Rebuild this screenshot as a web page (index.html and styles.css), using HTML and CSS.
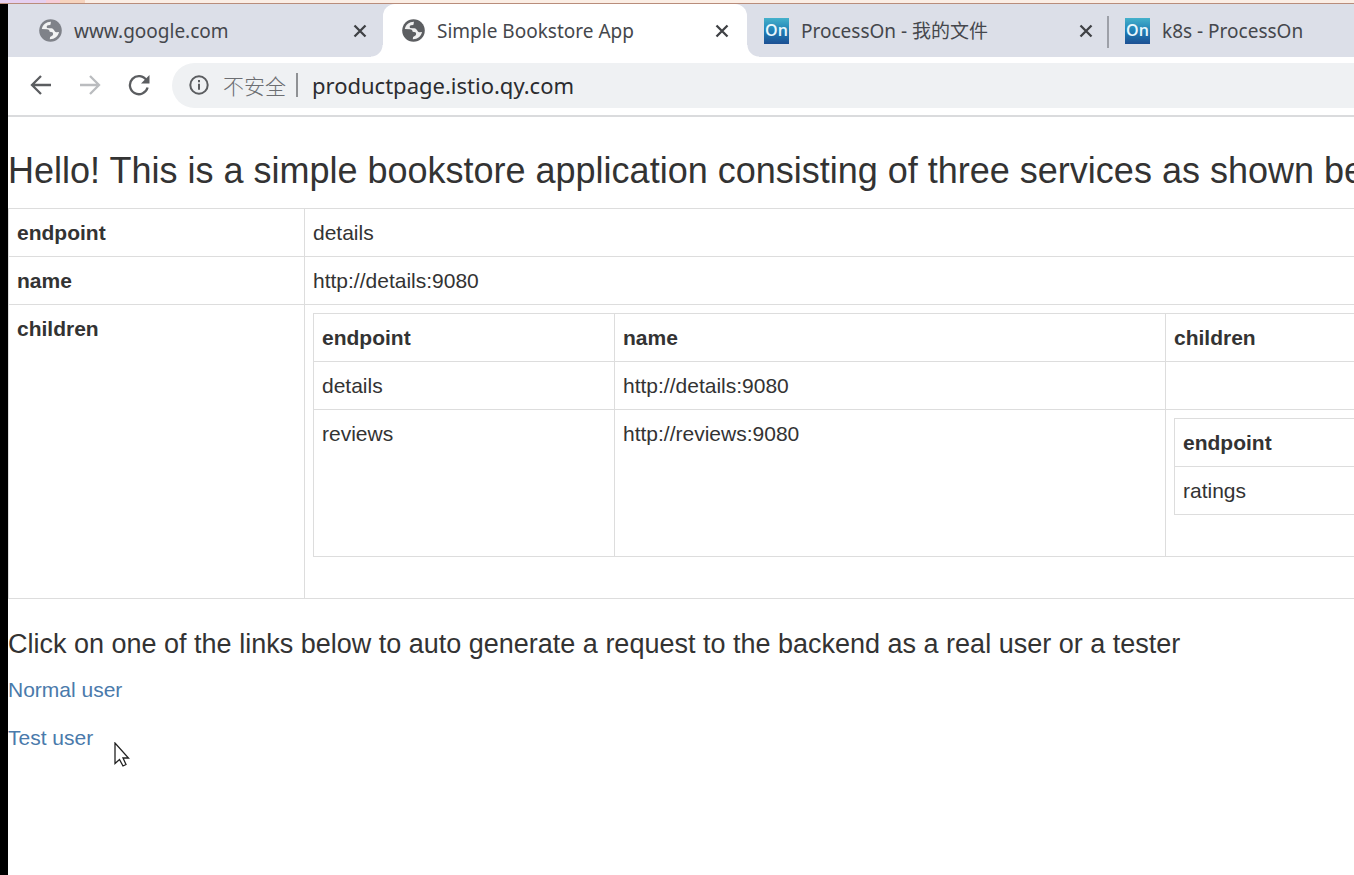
FILE: index.html
```html
<!DOCTYPE html>
<html lang="en">
<head>
<meta charset="utf-8">
<title>Simple Bookstore App</title>
<link rel="stylesheet" href="styles.css">
</head>
<body>
<svg class="defs" aria-hidden="true">
  <defs>
    <symbol id="globe" viewBox="0 0 22 22">
      <circle cx="11" cy="11" r="10.800" fill="currentColor"/>
      <path fill="#fff" fill-opacity=".9" d="M11.500 2.600C7 2.500 3.500 5.300 2.700 9.600l4.800.2c2 .1 2.500 1 2.700 2.400l2.600.4c1 .8.900 2.300.1 3.200l-2.300 1.400-.3 2.200c4.600.1 7.900-2.700 8.900-6.900l-2.600.1c-1.200-.1-1.700-.9-2.300-2.100-.8-1.400-2.300-1.700-4.200-1.600l-2.400-.4c-.8-1-.2-2.300 1-2.500l1.900-.2c.9-.5.300-1.700.9-3.200z"/>
    </symbol>
    <symbol id="cross" viewBox="0 0 14 14">
      <path d="M1.500 1.500l11 11M12.500 1.500l-11 11" fill="none" stroke="currentColor" stroke-width="2.300"/>
    </symbol>
  </defs>
</svg>
<div class="strip"></div>
<div class="window">
  <header>
    <nav class="tabs" aria-label="Tabs">
      <div class="tab">
        <svg class="favicon dim"><use href="#globe"/></svg>
        <span class="title">www.google.com</span>
        <button class="close" aria-label="Close tab"><svg><use href="#cross"/></svg></button>
      </div>
      <div class="tab active">
        <svg class="favicon"><use href="#globe"/></svg>
        <span class="title">Simple Bookstore App</span>
        <button class="close" aria-label="Close tab"><svg><use href="#cross"/></svg></button>
      </div>
      <div class="tab divided">
        <span class="on">On</span>
        <span class="title">ProcessOn - 我的文件</span>
        <button class="close" aria-label="Close tab"><svg><use href="#cross"/></svg></button>
      </div>
      <div class="tab">
        <span class="on">On</span>
        <span class="title">k8s - ProcessOn</span>
      </div>
    </nav>
    <div class="toolbar">
      <div class="buttons">
        <button class="nav" aria-label="Back"><svg viewBox="0 0 22 22"><path d="M21 11H2.500M11 2L2 11l9 9"/></svg></button>
        <button class="nav off" aria-label="Forward"><svg viewBox="0 0 22 22"><path d="M1 11h18.500M11 2l9 9-9 9"/></svg></button>
        <button class="nav" aria-label="Reload"><svg viewBox="0 0 22 22"><path d="M18.600 6.500A9 9 0 1 0 19.600 13.500"/><path class="solid" d="M21.500 1v8.500H13z"/></svg></button>
      </div>
      <div class="omnibox">
        <svg class="info" viewBox="0 0 20 20"><circle cx="10" cy="10" r="8.700"/><path d="M10 8.800v6M10 5v2.200"/></svg>
        <label class="insecure" for="url">不安全</label>
        <span class="bar"></span>
        <input id="url" type="text" value="productpage.istio.qy.com" spellcheck="false">
      </div>
    </div>
  </header>
  <main>
    <h1>Hello! This is a simple bookstore application consisting of three services as shown below</h1>
    <table class="outer">
      <colgroup><col class="c-key"><col></colgroup>
      <tr><th>endpoint</th><td>details</td></tr>
      <tr><th>name</th><td>http://details:9080</td></tr>
      <tr>
        <th>children</th>
        <td>
          <table>
            <colgroup><col class="c-endpoint"><col class="c-name"><col></colgroup>
            <tr><th>endpoint</th><th>name</th><th>children</th></tr>
            <tr><td>details</td><td>http://details:9080</td><td></td></tr>
            <tr>
              <td>reviews</td>
              <td>http://reviews:9080</td>
              <td>
                <table>
                  <tr><th>endpoint</th></tr>
                  <tr><td>ratings</td></tr>
                </table>
              </td>
            </tr>
          </table>
        </td>
      </tr>
    </table>
    <h2>Click on one of the links below to auto generate a request to the backend as a real user or a tester</h2>
    <p><a href="#normal">Normal user</a></p>
    <p><a href="#test">Test user</a></p>
  </main>
</div>
<svg class="pointer" viewBox="0 0 16 25" aria-hidden="true"><path d="M1 1v20.500l4.500-4 3.500 6.500 3-1.500-3-6.500h5.500z"/></svg>
</body>
</html>
```
FILE: styles.css
```css
* { box-sizing: border-box; }
html { height: 100%; }
body {
  margin: 0;
  min-height: 100%;
  display: flex;
  flex-direction: column;
  overflow: hidden;
  background: #000;
  color: #333;
  font: 21px/31px "Liberation Sans", Arial, sans-serif;
}
button { border: 0; padding: 0; background: none; color: inherit; }
svg { display: block; }
.defs { position: absolute; width: 0; height: 0; }

.strip {
  height: 4px;
  border-bottom: 1px solid #b98d7b;
  background: linear-gradient(90deg, #e6d0f0 46px, #f7cdd8 46px 60px, #f6d3bd 60px 85px, #fbeee5 85px);
}
.window { flex: 1; margin-left: 8px; background: #fff; }

/* Tab strip */
.tabs {
  display: flex;
  height: 53px;
  overflow: hidden;
  background: #dcdfe8;
  color: #45474c;
  font: 19px/26px "Noto Sans", "Noto Sans CJK SC", sans-serif;
}
.tab {
  position: relative;
  flex: 0 0 362px;
  display: flex;
  align-items: center;
  gap: 12px;
  padding: 0 3px 0 19px;
}
.tab:first-child { flex-basis: 375px; padding: 0 16px 0 31px; }
.tab.active { flex-basis: 364px; padding-right: 18px; background: #fff; border-radius: 12px 12px 0 0; }
.tab.divided { padding: 0 16px 0 17px; }
.tab.divided::after {
  content: "";
  position: absolute;
  right: 0;
  top: 12px;
  width: 2px;
  height: 32px;
  background: #9da0a8;
}
.tab.divided + .tab { padding-left: 16px; }
.tab.active::before, .tab.active::after {
  content: "";
  position: absolute;
  bottom: 0;
  width: 12px;
  height: 12px;
}
.tab.active::before { right: 100%; background: radial-gradient(circle at 0 0, transparent 11px, #fff 12px); }
.tab.active::after { left: 100%; background: radial-gradient(circle at 100% 0, transparent 11px, #fff 12px); }
.favicon { flex: none; width: 23px; height: 23px; color: #5c5e61; }
.favicon.dim { color: #7f8289; }
.title { flex: 1; white-space: nowrap; }
.close { width: 14px; height: 14px; color: #3f4145; }
.close svg { width: 14px; height: 14px; }
.on {
  width: 25px;
  height: 26px;
  background: linear-gradient(#45b1cb, #1f7fb5 50%, #1c4f93);
  color: #e9f7fd;
  font: 600 16px/25px "Open Sans", sans-serif;
  text-align: center;
}

/* Toolbar */
.toolbar {
  display: flex;
  align-items: center;
  height: 60px;
  padding: 0 0 2px 22px;
  gap: 22px;
  border-bottom: 2px solid #dadbdd;
}
.buttons { display: flex; gap: 27px; }
.nav { width: 22px; height: 22px; color: #5b5d60; }
.nav.off { color: #babcbf; }
.nav svg { width: 22px; height: 22px; fill: none; stroke: currentColor; stroke-width: 2.3; }
.nav .solid { fill: currentColor; stroke: none; }
.omnibox {
  flex: 1;
  display: flex;
  align-items: center;
  height: 45px;
  padding-left: 17px;
  border-radius: 23px 0 0 23px;
  background: #eff1f3;
}
.info { width: 20px; height: 20px; fill: none; stroke: #5b5d60; stroke-width: 2; }
.insecure { margin-left: 14px; color: #6c6e72; font: 300 21px/30px "Noto Sans CJK SC", sans-serif; }
.bar { width: 2px; height: 24px; margin: 0 14px 0 10px; background: #8f9194; }
#url {
  flex: 1;
  min-width: 0;
  border: 0;
  padding: 0;
  background: none;
  color: #2b2c2f;
  outline: 0;
  font: 22px/30px "Noto Sans", sans-serif;
}

/* Page */
main { padding-top: 34px; overflow: hidden; }
h1, h2 { margin: 0; font-weight: 400; white-space: nowrap; }
h1 { font-size: 36px; line-height: 40px; margin-bottom: 17px; }
h2 { font-size: 27px; line-height: 30px; margin: 30px 0 15px; }
table {
  width: 100%;
  margin-bottom: 32px;
  border-collapse: collapse;
  table-layout: fixed;
}
.outer { width: 150%; }
th, td {
  padding: 8px;
  border: 1px solid #ddd;
  text-align: left;
  vertical-align: top;
}
.c-key { width: 296px; }
.c-endpoint { width: 301px; }
.c-name { width: 551px; }
table table { margin-bottom: 33px; }
.outer { margin-bottom: 30px; }
p { margin: 0 0 17px; }
a { color: #4a7aab; text-decoration: none; }

.pointer { position: absolute; left: 114px; top: 742px; width: 16px; height: 25px; }
.pointer path { fill: #fff; stroke: #222; stroke-width: 1.3; }
```
